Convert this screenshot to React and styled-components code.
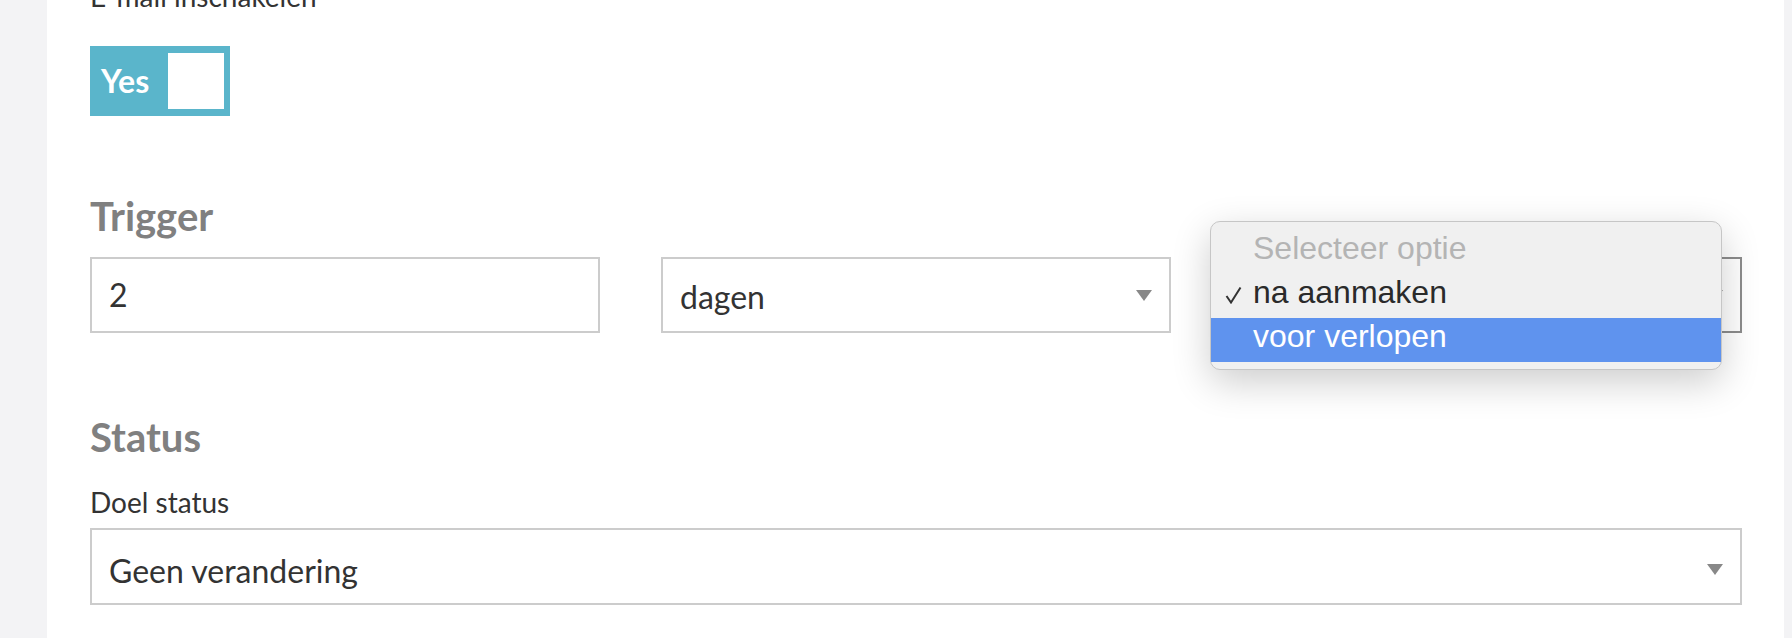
import React from "react";
import styled, { createGlobalStyle } from "styled-components";

const GlobalStyle = createGlobalStyle`
  html, body {
    margin: 0;
    padding: 0;
    background: #f3f3f5;
  }
  body {
    font-family: Lato, "Open Sans", sans-serif;
    color: #333;
  }
`;

const Page = styled.div`
  padding: 0 8px 0 47px;
  background: #f3f3f5;
`;

const Panel = styled.div`
  background: #fff;
  height: 638px;
  padding: 0 42px 0 43px;
  overflow: hidden;
`;

const FieldLabel = styled.div`
  font-size: 28px;
  line-height: 30px;
  color: #333;
  margin-top: ${(p) => p.$top || 0}px;
`;

const Toggle = styled.div`
  width: 140px;
  height: 70px;
  box-sizing: border-box;
  margin-top: 35px;
  padding: 0 6px 0 11px;
  background: #5ab5cb;
  display: flex;
  align-items: center;
  justify-content: space-between;
`;

const ToggleText = styled.span`
  color: #fff;
  font-weight: 700;
  font-size: 32px;
  line-height: 1;
`;

const Knob = styled.span`
  width: 56px;
  height: 56px;
  background: #fff;
`;

const Heading = styled.h2`
  margin: ${(p) => p.$top}px 0 0;
  font-size: 40px;
  line-height: 48px;
  font-weight: 700;
  color: #808080;
`;

const Row = styled.div`
  display: grid;
  grid-template-columns: repeat(3, 1fr);
  column-gap: 61px;
  margin-top: 17.5px;
`;

const Field = styled.div`
  position: relative;
  box-sizing: border-box;
  height: ${(p) => p.$height || 76}px;
  border: 2px solid ${(p) => (p.$focused ? "#8c8c8c" : "#cccccc")};
  background: #fff;
  display: flex;
  align-items: center;
  padding: ${(p) => p.$shift || 0}px 17px 0 17px;
  margin-top: ${(p) => p.$top || 0}px;
  font-size: 32px;
  line-height: 38px;
  color: #333;
`;

const Value = styled.span`
  flex: 1;
`;

const Arrow = () => (
  <svg width="16" height="11" viewBox="0 0 16 11" style={{ marginTop: -4 }}>
    <polygon points="0,0 16,0 8,11" fill="#888" />
  </svg>
);

const Menu = styled.div`
  position: absolute;
  left: -24px;
  top: -38px;
  width: 512px;
  box-sizing: border-box;
  padding: 8px 0 7px;
  background: #f0f0f0;
  border: 1px solid #c6c6c6;
  border-radius: 10px;
  box-shadow: 0 12px 38px rgba(0, 0, 0, 0.2);
  font-family: "Liberation Sans", Arial, sans-serif;
  z-index: 2;
`;

const MenuItem = styled.div`
  position: relative;
  height: 44px;
  box-sizing: border-box;
  padding: 0 0 8px 42px;
  font-size: 32px;
  line-height: 36px;
  color: ${(p) => (p.$muted ? "#b4b4b4" : p.$active ? "#fff" : "#2a2a2a")};
  background: ${(p) => (p.$active ? "#5f93ee" : "transparent")};
`;

const Check = styled.svg`
  position: absolute;
  left: 14px;
  top: 12px;
`;

export default function App() {
  return (
    <Page>
      <GlobalStyle />
      <Panel>
        <FieldLabel $top={-19}>E-mail inschakelen</FieldLabel>
        <Toggle>
          <ToggleText>Yes</ToggleText>
          <Knob />
        </Toggle>

        <Heading $top={75.5}>Trigger</Heading>
        <Row>
          <Field>
            <Value>2</Value>
          </Field>
          <Field $shift={4}>
            <Value>dagen</Value>
            <Arrow />
          </Field>
          <Field $focused $shift={4}>
            <Value />
            <Arrow />
            <Menu>
              <MenuItem $muted>Selecteer optie</MenuItem>
              <MenuItem>
                <Check width="17" height="18" viewBox="0 0 17 18">
                  <polyline
                    points="1.5,10 6,16.5 15.5,1.5"
                    fill="none"
                    stroke="#333"
                    strokeWidth="2"
                  />
                </Check>
                na aanmaken
              </MenuItem>
              <MenuItem $active>voor verlopen</MenuItem>
            </Menu>
          </Field>
        </Row>

        <Heading $top={79.5}>Status</Heading>
        <FieldLabel $top={26.7}>Doel status</FieldLabel>
        <Field $top={10.8} $height={77} $shift={10}>
          <Value>Geen verandering</Value>
          <Arrow />
        </Field>
      </Panel>
    </Page>
  );
}
